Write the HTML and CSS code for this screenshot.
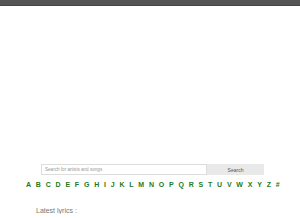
FILE: index.html
```html
<!DOCTYPE html>
<html lang="en">
<head>
    <meta charset="UTF-8">
    <title>Lyrics</title>
    <link rel="stylesheet" href="styles.css">
</head>
<body>
    <div class="top-bar"></div>
    <div class="main">
        <form class="search-form">
            <input class="search-input" type="text" placeholder="Search for artists and songs">
            <button class="search-button" type="button">Search</button>
        </form>
        <div class="letters">
            <a href="#">A</a><a href="#">B</a><a href="#">C</a><a href="#">D</a><a href="#">E</a><a href="#">F</a><a href="#">G</a><a href="#">H</a><a href="#">I</a><a href="#">J</a><a href="#">K</a><a href="#">L</a><a href="#">M</a><a href="#">N</a><a href="#">O</a><a href="#">P</a><a href="#">Q</a><a href="#">R</a><a href="#">S</a><a href="#">T</a><a href="#">U</a><a href="#">V</a><a href="#">W</a><a href="#">X</a><a href="#">Y</a><a href="#">Z</a><a href="#">#</a>
        </div>
        <div class="latest">Latest lyrics :</div>
    </div>
</body>
</html>
```

FILE: styles.css
```css
body {
    margin: 0;
    font-family: "Liberation Sans", Arial, sans-serif;
    background-color: #fff;
    overflow: hidden;
}
.top-bar {
    height: 5px;
    background-color: #555;
    border-bottom: 1px solid #444;
}
.main {
    padding-top: 158px;
}
.search-form {
    display: flex;
    margin: 0 36px 0 41px;
    height: 11px;
}
.search-input {
    flex: 1;
    box-sizing: border-box;
    height: 11px;
    margin: 0;
    padding: 0 3px;
    border: 1px solid #ddd;
    font-family: inherit;
    font-size: 4.6px;
    color: #888;
}
.search-input::placeholder {
    color: #999;
}
.search-button {
    width: 57px;
    height: 11px;
    margin: 0;
    padding: 0;
    border: none;
    background-color: #e9e9e9;
    font-family: inherit;
    font-size: 5px;
    color: #555;
}
.letters {
    display: flex;
    justify-content: space-between;
    margin: 6px 20px 0 26px;
}
.letters a {
    font-size: 7px;
    font-weight: bold;
    color: #237a23;
    text-decoration: none;
}
.latest {
    margin: 19px 0 0 36px;
    font-size: 7px;
    color: #777;
}
```
